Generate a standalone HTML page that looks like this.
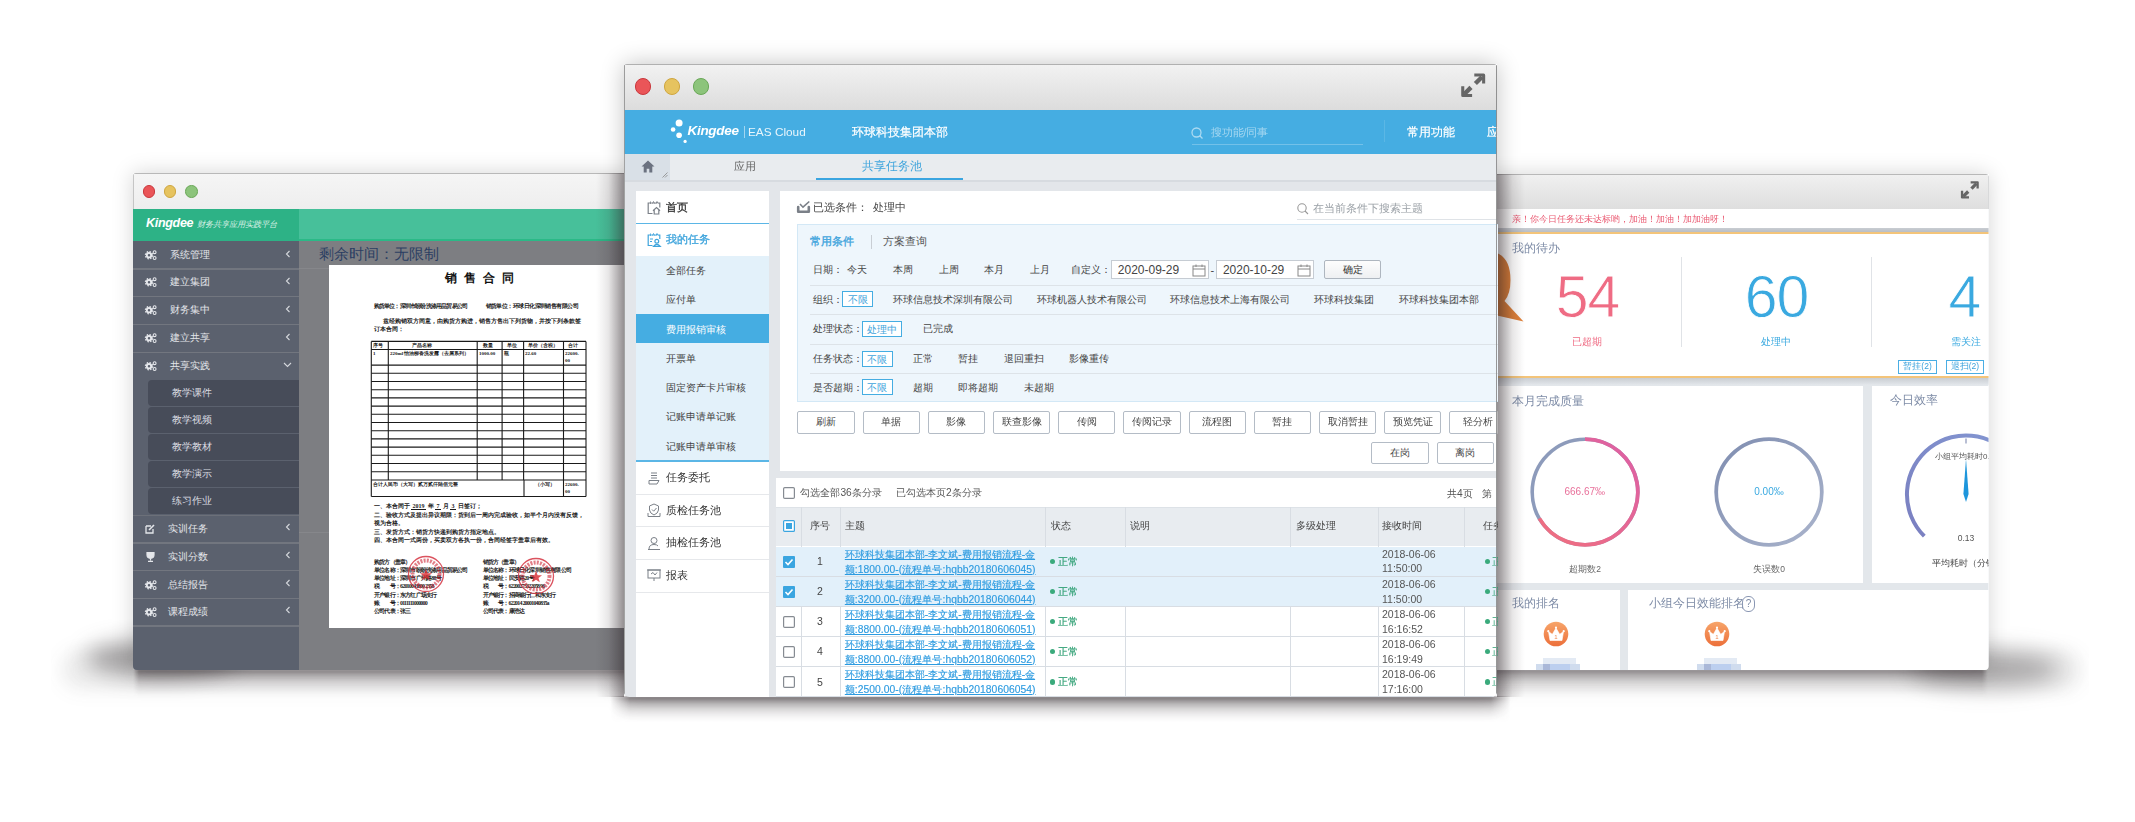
<!DOCTYPE html><html><head><meta charset="utf-8"><style>
*{box-sizing:border-box;margin:0;padding:0}
html,body{width:2135px;height:822px;overflow:hidden;background:#fff;font-family:"Liberation Sans",sans-serif;position:relative}
.a{position:absolute}
.t{position:absolute;white-space:nowrap}
.L{position:absolute;left:0;top:0;width:2135px;height:822px}
svg{position:absolute;left:0;top:0;overflow:visible}
</style></head><body><div id="root" style="position:absolute;left:0;top:0;width:2135px;height:822px;filter:blur(0.35px)">
<div class="a" style="left:51px;top:590px;width:2038px;height:150px;overflow:hidden"><div class="a" style="left:10px;top:60px;width:2020px;height:40px;border-radius:20px;background:rgba(60,55,58,0.09);filter:blur(9px)"></div><div class="a" style="left:35px;top:50px;width:150px;height:36px;border-radius:50%;background:rgba(60,55,58,0.45);filter:blur(11px)"></div><div class="a" style="left:1860px;top:62px;width:150px;height:34px;border-radius:50%;background:rgba(60,55,58,0.40);filter:blur(12px)"></div></div>
<div class="a" style="left:133px;top:669px;width:507px;height:28px;filter:blur(1.5px);background:linear-gradient(rgba(55,45,50,0.56) 0%,rgba(55,45,50,0.31) 22%,rgba(55,45,50,0.12) 50%,rgba(55,45,50,0.04) 80%,rgba(55,45,50,0) 100%);-webkit-mask-image:linear-gradient(90deg,transparent,#000 6px,#000 calc(100% - 6px),transparent)"></div>
<div class="a" style="left:1480px;top:669px;width:508px;height:28px;filter:blur(1.5px);background:linear-gradient(rgba(55,45,50,0.52) 0%,rgba(55,45,50,0.29) 22%,rgba(55,45,50,0.11) 50%,rgba(55,45,50,0.04) 80%,rgba(55,45,50,0) 100%);-webkit-mask-image:linear-gradient(90deg,transparent,#000 6px,#000 calc(100% - 6px),transparent)"></div>
<div class="a" style="left:609.5px;top:696px;width:901.5px;height:26px;filter:blur(1.5px);background:linear-gradient(rgba(55,45,50,0.66) 0%,rgba(55,45,50,0.36) 22%,rgba(55,45,50,0.15) 50%,rgba(55,45,50,0.04) 80%,rgba(55,45,50,0) 100%);-webkit-mask-image:linear-gradient(90deg,transparent,#000 20px,#000 calc(100% - 20px),transparent)"></div>
<div class="a" style="left:133px;top:173px;width:507px;height:497px;box-shadow:0 0 20px rgba(0,0,0,0.17)"></div>
<div class="L" style="clip-path:inset(173px 1495px 152px 133px round 3px 3px 4px 4px)">
<div class="a" style="left:133px;top:173px;width:507px;height:497px;background:#7d7e82"></div>
<div class="a" style="left:133px;top:173px;width:507px;height:36px;background:linear-gradient(#f5f5f5,#eeeeee);border-top:1px solid #b8b8b8;border-left:1px solid #c5c5c5"></div>
<div class="a" style="left:142.5px;top:185.2px;width:12.6px;height:12.6px;border-radius:50%;background:#ea5558;border:1px solid #c9383d"></div>
<div class="a" style="left:163.8px;top:185.2px;width:12.6px;height:12.6px;border-radius:50%;background:#e6c35f;border:1px solid #cfa640"></div>
<div class="a" style="left:185.1px;top:185.2px;width:12.6px;height:12.6px;border-radius:50%;background:#8cc47b;border:1px solid #6aa858"></div>
<div class="a" style="left:133px;top:209px;width:166px;height:32px;background:#2db286"></div>
<div class="a" style="left:299px;top:209px;width:341px;height:32px;background:#47c09a"></div>
<div class="a" style="left:299px;top:239px;width:341px;height:2px;background:#2bb987"></div>
<div class="t" style="left:146px;top:214.8px;font-size:12.5px;line-height:17.5px;color:#fff;font-weight:bold;font-style:italic;letter-spacing:-0.3px">Kingdee</div>
<div class="t" style="left:197px;top:219.2px;font-size:8.2px;line-height:11.5px;color:rgba(255,255,255,0.8);font-weight:normal;font-style:italic">财务共享应用实践平台</div>
<div class="a" style="left:133px;top:241px;width:166px;height:429px;background:#5b616e"></div>
<svg style="left:145px;top:249.5px" width="12" height="10" viewBox="0 0 12 10"><g fill="none" stroke="#e6e8ec"><circle cx="4" cy="5.2" r="2.2" stroke-width="1.9"/><circle cx="4" cy="5.2" r="3.6" stroke-width="1.3" stroke-dasharray="1.5 1.33"/><circle cx="9.6" cy="2.2" r="1.45" stroke-width="1.1"/><circle cx="9.6" cy="8" r="1.45" stroke-width="1.1"/></g></svg>
<div class="t" style="left:170px;top:247.5px;font-size:10px;line-height:14.0px;color:#e4e6ea;font-weight:normal;">系统管理</div>
<svg style="left:285px;top:249.5px" width="6" height="8"><path d="M4.5 1 L1.5 4 L4.5 7" fill="none" stroke="#d5d8dd" stroke-width="1.1"/></svg>
<div class="a" style="left:133px;top:268.0px;width:166px;height:1.6px;background:#72767f"></div>
<svg style="left:145px;top:277.4px" width="12" height="10" viewBox="0 0 12 10"><g fill="none" stroke="#e6e8ec"><circle cx="4" cy="5.2" r="2.2" stroke-width="1.9"/><circle cx="4" cy="5.2" r="3.6" stroke-width="1.3" stroke-dasharray="1.5 1.33"/><circle cx="9.6" cy="2.2" r="1.45" stroke-width="1.1"/><circle cx="9.6" cy="8" r="1.45" stroke-width="1.1"/></g></svg>
<div class="t" style="left:170px;top:275.4px;font-size:10px;line-height:14.0px;color:#e4e6ea;font-weight:normal;">建立集团</div>
<svg style="left:285px;top:277.4px" width="6" height="8"><path d="M4.5 1 L1.5 4 L4.5 7" fill="none" stroke="#d5d8dd" stroke-width="1.1"/></svg>
<div class="a" style="left:133px;top:295.9px;width:166px;height:1.6px;background:#72767f"></div>
<svg style="left:145px;top:305.29999999999995px" width="12" height="10" viewBox="0 0 12 10"><g fill="none" stroke="#e6e8ec"><circle cx="4" cy="5.2" r="2.2" stroke-width="1.9"/><circle cx="4" cy="5.2" r="3.6" stroke-width="1.3" stroke-dasharray="1.5 1.33"/><circle cx="9.6" cy="2.2" r="1.45" stroke-width="1.1"/><circle cx="9.6" cy="8" r="1.45" stroke-width="1.1"/></g></svg>
<div class="t" style="left:170px;top:303.3px;font-size:10px;line-height:14.0px;color:#e4e6ea;font-weight:normal;">财务集中</div>
<svg style="left:285px;top:305.29999999999995px" width="6" height="8"><path d="M4.5 1 L1.5 4 L4.5 7" fill="none" stroke="#d5d8dd" stroke-width="1.1"/></svg>
<div class="a" style="left:133px;top:323.79999999999995px;width:166px;height:1.6px;background:#72767f"></div>
<svg style="left:145px;top:333.19999999999993px" width="12" height="10" viewBox="0 0 12 10"><g fill="none" stroke="#e6e8ec"><circle cx="4" cy="5.2" r="2.2" stroke-width="1.9"/><circle cx="4" cy="5.2" r="3.6" stroke-width="1.3" stroke-dasharray="1.5 1.33"/><circle cx="9.6" cy="2.2" r="1.45" stroke-width="1.1"/><circle cx="9.6" cy="8" r="1.45" stroke-width="1.1"/></g></svg>
<div class="t" style="left:170px;top:331.2px;font-size:10px;line-height:14.0px;color:#e4e6ea;font-weight:normal;">建立共享</div>
<svg style="left:285px;top:333.19999999999993px" width="6" height="8"><path d="M4.5 1 L1.5 4 L4.5 7" fill="none" stroke="#d5d8dd" stroke-width="1.1"/></svg>
<div class="a" style="left:133px;top:351.69999999999993px;width:166px;height:1.6px;background:#72767f"></div>
<svg style="left:145px;top:361.0999999999999px" width="12" height="10" viewBox="0 0 12 10"><g fill="none" stroke="#e6e8ec"><circle cx="4" cy="5.2" r="2.2" stroke-width="1.9"/><circle cx="4" cy="5.2" r="3.6" stroke-width="1.3" stroke-dasharray="1.5 1.33"/><circle cx="9.6" cy="2.2" r="1.45" stroke-width="1.1"/><circle cx="9.6" cy="8" r="1.45" stroke-width="1.1"/></g></svg>
<div class="t" style="left:170px;top:359.1px;font-size:10px;line-height:14.0px;color:#e4e6ea;font-weight:normal;">共享实践</div>
<svg style="left:283px;top:362.0999999999999px" width="9" height="6"><path d="M1 1 L4.5 4.5 L8 1" fill="none" stroke="#d5d8dd" stroke-width="1.1"/></svg>
<div class="a" style="left:147.6px;top:380.0px;width:151.4px;height:26.0px;background:#474c59;border-radius:4px 0 0 4px"></div>
<div class="t" style="left:172px;top:386.0px;font-size:10px;line-height:14.0px;color:#d9dbe0;font-weight:normal;">教学课件</div>
<div class="a" style="left:147.6px;top:406.9px;width:151.4px;height:26.0px;background:#474c59;border-radius:4px 0 0 4px"></div>
<div class="t" style="left:172px;top:412.9px;font-size:10px;line-height:14.0px;color:#d9dbe0;font-weight:normal;">教学视频</div>
<div class="a" style="left:147.6px;top:433.8px;width:151.4px;height:26.0px;background:#474c59;border-radius:4px 0 0 4px"></div>
<div class="t" style="left:172px;top:439.8px;font-size:10px;line-height:14.0px;color:#d9dbe0;font-weight:normal;">教学教材</div>
<div class="a" style="left:147.6px;top:460.7px;width:151.4px;height:26.0px;background:#474c59;border-radius:4px 0 0 4px"></div>
<div class="t" style="left:172px;top:466.7px;font-size:10px;line-height:14.0px;color:#d9dbe0;font-weight:normal;">教学演示</div>
<div class="a" style="left:147.6px;top:487.6px;width:151.4px;height:26.0px;background:#474c59;border-radius:4px 0 0 4px"></div>
<div class="t" style="left:172px;top:493.6px;font-size:10px;line-height:14.0px;color:#d9dbe0;font-weight:normal;">练习作业</div>
<div class="a" style="left:133px;top:514.5px;width:166px;height:1.5px;background:#6c7079"></div>
<svg style="left:145px;top:524px" width="11" height="10"><path d="M1 2 H6 M1 2 V9 H8 V5" fill="none" stroke="#e4e6ea" stroke-width="1.3"/><path d="M4 6 L9 1" stroke="#e4e6ea" stroke-width="1.6"/></svg>
<div class="t" style="left:168px;top:522.0px;font-size:10px;line-height:14.0px;color:#e4e6ea;font-weight:normal;">实训任务</div>
<svg style="left:285px;top:523px" width="6" height="8"><path d="M4.5 1 L1.5 4 L4.5 7" fill="none" stroke="#d5d8dd" stroke-width="1.1"/></svg>
<div class="a" style="left:133px;top:542px;width:166px;height:1.6px;background:#72767f"></div>
<svg style="left:145px;top:551.8px" width="11" height="10"><path d="M2 0.5 H9 V3 Q9 6 5.5 6.5 Q2 6 2 3 Z M5.5 6.5 V8.5 M3 9.3 H8" fill="#e4e6ea" stroke="#e4e6ea" stroke-width="1.2"/></svg>
<div class="t" style="left:168px;top:549.8px;font-size:10px;line-height:14.0px;color:#e4e6ea;font-weight:normal;">实训分数</div>
<svg style="left:285px;top:550.8px" width="6" height="8"><path d="M4.5 1 L1.5 4 L4.5 7" fill="none" stroke="#d5d8dd" stroke-width="1.1"/></svg>
<div class="a" style="left:133px;top:569.8px;width:166px;height:1.6px;background:#72767f"></div>
<svg style="left:145px;top:579.5999999999999px" width="12" height="10" viewBox="0 0 12 10"><g fill="none" stroke="#e6e8ec"><circle cx="4" cy="5.2" r="2.2" stroke-width="1.9"/><circle cx="4" cy="5.2" r="3.6" stroke-width="1.3" stroke-dasharray="1.5 1.33"/><circle cx="9.6" cy="2.2" r="1.45" stroke-width="1.1"/><circle cx="9.6" cy="8" r="1.45" stroke-width="1.1"/></g></svg>
<div class="t" style="left:168px;top:577.6px;font-size:10px;line-height:14.0px;color:#e4e6ea;font-weight:normal;">总结报告</div>
<svg style="left:285px;top:578.5999999999999px" width="6" height="8"><path d="M4.5 1 L1.5 4 L4.5 7" fill="none" stroke="#d5d8dd" stroke-width="1.1"/></svg>
<div class="a" style="left:133px;top:597.5999999999999px;width:166px;height:1.6px;background:#72767f"></div>
<svg style="left:145px;top:607.3999999999999px" width="12" height="10" viewBox="0 0 12 10"><g fill="none" stroke="#e6e8ec"><circle cx="4" cy="5.2" r="2.2" stroke-width="1.9"/><circle cx="4" cy="5.2" r="3.6" stroke-width="1.3" stroke-dasharray="1.5 1.33"/><circle cx="9.6" cy="2.2" r="1.45" stroke-width="1.1"/><circle cx="9.6" cy="8" r="1.45" stroke-width="1.1"/></g></svg>
<div class="t" style="left:168px;top:605.4px;font-size:10px;line-height:14.0px;color:#e4e6ea;font-weight:normal;">课程成绩</div>
<svg style="left:285px;top:606.3999999999999px" width="6" height="8"><path d="M4.5 1 L1.5 4 L4.5 7" fill="none" stroke="#d5d8dd" stroke-width="1.1"/></svg>
<div class="a" style="left:133px;top:625.3999999999999px;width:166px;height:1.6px;background:#72767f"></div>
<div class="t" style="left:318.5px;top:243.3px;font-size:15.2px;line-height:21.3px;color:#2c3e62;font-weight:normal;">剩余时间：无限制</div>
<div class="a" style="left:299px;top:267.5px;width:341px;height:1.0px;background:#86878b"></div>
<div class="a" style="left:299px;top:532px;width:30px;height:1px;background:#86878b"></div>
<div class="a" style="left:328.5px;top:265px;width:311.5px;height:363px;background:#fff"></div>
<div class="t" style="left:444.5px;top:270.1px;font-size:12px;line-height:16.8px;color:#111;font-weight:bold;letter-spacing:7px">销售合同</div>
<div class="t" style="left:373.5px;top:301.5px;font-size:6px;line-height:8.4px;color:#1a1a1a;font-weight:bold;font-family:'Liberation Serif',serif;letter-spacing:-0.8px">购货单位：深圳市盼盼洗涤用品贸易公司</div>
<div class="t" style="left:485.5px;top:301.5px;font-size:6px;line-height:8.4px;color:#1a1a1a;font-weight:bold;font-family:'Liberation Serif',serif;letter-spacing:-0.55px">销货单位：环球日化深圳销售有限公司</div>
<div class="t" style="left:383px;top:317.1px;font-size:6px;line-height:8.4px;color:#1a1a1a;font-weight:bold;font-family:'Liberation Serif',serif">兹经购销双方同意，由购货方购进，销售方售出下列货物，并按下列条款签</div>
<div class="t" style="left:373.5px;top:325.3px;font-size:6px;line-height:8.4px;color:#1a1a1a;font-weight:bold;font-family:'Liberation Serif',serif">订本合同：</div>
<svg style="left:0;top:0" width="2135" height="822"><g stroke="#1a1a1a" stroke-width="1.1" fill="none"><line x1="371.3" y1="341.4" x2="586" y2="341.4"/><line x1="371.3" y1="349.5" x2="586" y2="349.5"/><line x1="371.3" y1="365.1" x2="586" y2="365.1"/><line x1="371.3" y1="373.3" x2="586" y2="373.3"/><line x1="371.3" y1="381.5" x2="586" y2="381.5"/><line x1="371.3" y1="389.7" x2="586" y2="389.7"/><line x1="371.3" y1="397.9" x2="586" y2="397.9"/><line x1="371.3" y1="406.09999999999997" x2="586" y2="406.09999999999997"/><line x1="371.3" y1="414.29999999999995" x2="586" y2="414.29999999999995"/><line x1="371.3" y1="422.49999999999994" x2="586" y2="422.49999999999994"/><line x1="371.3" y1="430.69999999999993" x2="586" y2="430.69999999999993"/><line x1="371.3" y1="438.8999999999999" x2="586" y2="438.8999999999999"/><line x1="371.3" y1="447.0999999999999" x2="586" y2="447.0999999999999"/><line x1="371.3" y1="455.2999999999999" x2="586" y2="455.2999999999999"/><line x1="371.3" y1="463.4999999999999" x2="586" y2="463.4999999999999"/><line x1="371.3" y1="471.6999999999999" x2="586" y2="471.6999999999999"/><line x1="371.3" y1="480" x2="586" y2="480"/><line x1="371.3" y1="496.5" x2="586" y2="496.5"/><line x1="371.3" y1="341.4" x2="371.3" y2="496.5"/><line x1="388.3" y1="341.4" x2="388.3" y2="480"/><line x1="477.2" y1="341.4" x2="477.2" y2="480"/><line x1="502.1" y1="341.4" x2="502.1" y2="480"/><line x1="523.6" y1="341.4" x2="523.6" y2="480"/><line x1="563.5" y1="341.4" x2="563.5" y2="480"/><line x1="586" y1="341.4" x2="586" y2="496.5"/><line x1="524" y1="480" x2="524" y2="496.5"/><line x1="563.5" y1="480" x2="563.5" y2="496.5"/></g></svg>
<div class="t" style="left:373px;top:342.0px;font-size:5px;line-height:7.0px;color:#1a1a1a;font-weight:bold;font-family:'Liberation Serif',serif">序号</div>
<div class="t" style="left:412px;top:342.0px;font-size:5px;line-height:7.0px;color:#1a1a1a;font-weight:bold;font-family:'Liberation Serif',serif">产品名称</div>
<div class="t" style="left:483px;top:342.0px;font-size:5px;line-height:7.0px;color:#1a1a1a;font-weight:bold;font-family:'Liberation Serif',serif">数量</div>
<div class="t" style="left:507px;top:342.0px;font-size:5px;line-height:7.0px;color:#1a1a1a;font-weight:bold;font-family:'Liberation Serif',serif">单位</div>
<div class="t" style="left:528px;top:342.0px;font-size:5px;line-height:7.0px;color:#1a1a1a;font-weight:bold;font-family:'Liberation Serif',serif">单价（含税）</div>
<div class="t" style="left:568px;top:342.0px;font-size:5px;line-height:7.0px;color:#1a1a1a;font-weight:bold;font-family:'Liberation Serif',serif">合计</div>
<div class="t" style="left:373px;top:350.0px;font-size:5px;line-height:7.0px;color:#1a1a1a;font-weight:bold;font-family:'Liberation Serif',serif">1</div>
<div class="t" style="left:390px;top:350.0px;font-size:5px;line-height:7.0px;color:#1a1a1a;font-weight:bold;font-family:'Liberation Serif',serif">220ml 怡油柳香洗发露（去屑系列）</div>
<div class="t" style="left:479px;top:350.0px;font-size:5px;line-height:7.0px;color:#1a1a1a;font-weight:bold;font-family:'Liberation Serif',serif">1000.00</div>
<div class="t" style="left:504px;top:350.0px;font-size:5px;line-height:7.0px;color:#1a1a1a;font-weight:bold;font-family:'Liberation Serif',serif">瓶</div>
<div class="t" style="left:525px;top:350.0px;font-size:5px;line-height:7.0px;color:#1a1a1a;font-weight:bold;font-family:'Liberation Serif',serif">22.60</div>
<div class="t" style="left:565px;top:350.0px;font-size:5px;line-height:7.0px;color:#1a1a1a;font-weight:bold;font-family:'Liberation Serif',serif">22600.</div>
<div class="t" style="left:565px;top:357.0px;font-size:5px;line-height:7.0px;color:#1a1a1a;font-weight:bold;font-family:'Liberation Serif',serif">00</div>
<div class="t" style="left:373px;top:481.0px;font-size:5px;line-height:7.0px;color:#1a1a1a;font-weight:bold;font-family:'Liberation Serif',serif">合计人民币（大写）贰万贰仟陆佰元整</div>
<div class="t" style="left:535px;top:481.0px;font-size:5px;line-height:7.0px;color:#1a1a1a;font-weight:bold;font-family:'Liberation Serif',serif">（小写）</div>
<div class="t" style="left:565px;top:481.0px;font-size:5px;line-height:7.0px;color:#1a1a1a;font-weight:bold;font-family:'Liberation Serif',serif">22600.</div>
<div class="t" style="left:565px;top:488.0px;font-size:5px;line-height:7.0px;color:#1a1a1a;font-weight:bold;font-family:'Liberation Serif',serif">00</div>
<div class="t" style="left:373.5px;top:502.3px;font-size:6px;line-height:8.4px;color:#1a1a1a;font-weight:bold;font-family:'Liberation Serif',serif">一、本合同于 <u>&nbsp;2019&nbsp;</u> 年 <u>&nbsp;7&nbsp;</u> 月 <u>&nbsp;3&nbsp;</u> 日签订；</div>
<div class="t" style="left:373.5px;top:510.7px;font-size:6px;line-height:8.4px;color:#1a1a1a;font-weight:bold;font-family:'Liberation Serif',serif">二、验收方式及提出异议期限：货到后一周内完成验收，如半个月内没有反馈，</div>
<div class="t" style="left:373.5px;top:519.1px;font-size:6px;line-height:8.4px;color:#1a1a1a;font-weight:bold;font-family:'Liberation Serif',serif">视为合格。</div>
<div class="t" style="left:373.5px;top:527.5px;font-size:6px;line-height:8.4px;color:#1a1a1a;font-weight:bold;font-family:'Liberation Serif',serif">三、发货方式：销货方快递到购货方指定地点。</div>
<div class="t" style="left:373.5px;top:535.9px;font-size:6px;line-height:8.4px;color:#1a1a1a;font-weight:bold;font-family:'Liberation Serif',serif">四、本合同一式两份，买卖双方各执一份，合同经签字盖章后有效。</div>
<div class="t" style="left:374px;top:557.8px;font-size:6px;line-height:8.4px;color:#1a1a1a;font-weight:bold;font-family:'Liberation Serif',serif;letter-spacing:-0.8px">购货方（盖章）</div>
<div class="t" style="left:482.5px;top:557.8px;font-size:6px;line-height:8.4px;color:#1a1a1a;font-weight:bold;font-family:'Liberation Serif',serif;letter-spacing:-0.8px">销货方（盖章）</div>
<div class="t" style="left:374px;top:566.0px;font-size:6px;line-height:8.4px;color:#1a1a1a;font-weight:bold;font-family:'Liberation Serif',serif;letter-spacing:-0.8px">单位名称：深圳市盼盼洗涤用品贸易公司</div>
<div class="t" style="left:482.5px;top:566.0px;font-size:6px;line-height:8.4px;color:#1a1a1a;font-weight:bold;font-family:'Liberation Serif',serif;letter-spacing:-0.8px">单位名称：环球日化深圳销售有限公司</div>
<div class="t" style="left:374px;top:574.2px;font-size:6px;line-height:8.4px;color:#1a1a1a;font-weight:bold;font-family:'Liberation Serif',serif;letter-spacing:-0.8px">单位地址：深圳市广州路88号</div>
<div class="t" style="left:482.5px;top:574.2px;font-size:6px;line-height:8.4px;color:#1a1a1a;font-weight:bold;font-family:'Liberation Serif',serif;letter-spacing:-0.8px">单位地址：民安路20号</div>
<div class="t" style="left:374px;top:582.4px;font-size:6px;line-height:8.4px;color:#1a1a1a;font-weight:bold;font-family:'Liberation Serif',serif;letter-spacing:-0.8px">税　　号：62010043800 2358</div>
<div class="t" style="left:482.5px;top:582.4px;font-size:6px;line-height:8.4px;color:#1a1a1a;font-weight:bold;font-family:'Liberation Serif',serif;letter-spacing:-0.8px">税　　号：62200273322058 96</div>
<div class="t" style="left:374px;top:590.6px;font-size:6px;line-height:8.4px;color:#1a1a1a;font-weight:bold;font-family:'Liberation Serif',serif;letter-spacing:-0.8px">开户银行：东方红广场支行</div>
<div class="t" style="left:482.5px;top:590.6px;font-size:6px;line-height:8.4px;color:#1a1a1a;font-weight:bold;font-family:'Liberation Serif',serif;letter-spacing:-0.8px">开户银行：招商银行仁和东支行</div>
<div class="t" style="left:374px;top:598.8px;font-size:6px;line-height:8.4px;color:#1a1a1a;font-weight:bold;font-family:'Liberation Serif',serif;letter-spacing:-0.8px">账　　号：0111111000000</div>
<div class="t" style="left:482.5px;top:598.8px;font-size:6px;line-height:8.4px;color:#1a1a1a;font-weight:bold;font-family:'Liberation Serif',serif;letter-spacing:-0.8px">账　　号：622014 20001040835a</div>
<div class="t" style="left:374px;top:607.0px;font-size:6px;line-height:8.4px;color:#1a1a1a;font-weight:bold;font-family:'Liberation Serif',serif;letter-spacing:-0.8px">公司代表：张三</div>
<div class="t" style="left:482.5px;top:607.0px;font-size:6px;line-height:8.4px;color:#1a1a1a;font-weight:bold;font-family:'Liberation Serif',serif;letter-spacing:-0.8px">公司代表：康浩达</div>
<svg style="left:406.5px;top:554.6px" width="38" height="38"><circle cx="19" cy="19" r="17.5" fill="none" stroke="rgba(210,40,55,0.8)" stroke-width="1.3"/><circle cx="19" cy="19" r="13.5" fill="none" stroke="rgba(205,40,55,0.6)" stroke-width="4" stroke-dasharray="2 1.2"/><path d="M19 14 L20.6 18.3 L25 18.3 L21.5 21 L22.8 25.3 L19 22.7 L15.2 25.3 L16.5 21 L13 18.3 L17.4 18.3 Z" fill="rgba(215,40,45,0.8)"/></svg>
<svg style="left:516.6px;top:557.2px" width="38" height="38"><circle cx="19" cy="19" r="17.5" fill="none" stroke="rgba(210,40,55,0.8)" stroke-width="1.3"/><circle cx="19" cy="19" r="13.5" fill="none" stroke="rgba(205,40,55,0.6)" stroke-width="4" stroke-dasharray="2 1.2"/><path d="M19 14 L20.6 18.3 L25 18.3 L21.5 21 L22.8 25.3 L19 22.7 L15.2 25.3 L16.5 21 L13 18.3 L17.4 18.3 Z" fill="rgba(215,40,45,0.8)"/></svg>
</div>
<div class="a" style="left:1480px;top:174px;width:508.5px;height:496px;box-shadow:0 0 20px rgba(0,0,0,0.17)"></div>
<div class="L" style="clip-path:inset(174px 146.5px 152px 1480px round 3px 3px 4px 4px)">
<div class="a" style="left:1480px;top:174px;width:508.5px;height:496px;background:#e3e7eb"></div>
<div class="a" style="left:1480px;top:174px;width:508.5px;height:34.5px;background:linear-gradient(#f0f0f0,#dedede);border-top:1px solid #b8b8b8;border-right:1px solid #c0c0c0"></div>
<svg style="left:1960.16px;top:180.16px" width="19.68" height="19.68" viewBox="0 0 24 24"><g fill="none" stroke="#666" stroke-linejoin="round"><path d="M13 2.8 H21.5 V10.5" stroke-width="2.8"/><path d="M20 4.5 L14 10.5" stroke-width="4"/><path d="M2.5 13 V21.3 H11" stroke-width="2.8"/><path d="M4 20 L10 14" stroke-width="4"/></g></svg>
<div class="a" style="left:1480px;top:208.5px;width:508.5px;height:19.5px;background:#fff"></div>
<div class="t" style="left:1512px;top:213.2px;font-size:8.9px;line-height:12.5px;color:#ea5a72;font-weight:normal;">亲！你今日任务还未达标哟，加油！加油！加加油呀！</div>
<div class="a" style="left:1480px;top:228px;width:508.5px;height:4px;background:linear-gradient(#c9cdd2,#b9bec5)"></div>
<div class="a" style="left:1480px;top:232px;width:508.5px;height:2px;background:#f3c47a"></div>
<div class="a" style="left:1480px;top:234px;width:508.5px;height:142px;background:#fff"></div>
<div class="a" style="left:1480px;top:376px;width:508.5px;height:2px;background:#f3c47a"></div>
<div class="a" style="left:1480px;top:378px;width:508.5px;height:7px;background:linear-gradient(#c9cdd2,#e3e7eb)"></div>
<div class="t" style="left:1512px;top:240.2px;font-size:11.8px;line-height:16.5px;color:#7d8ba6;font-weight:normal;">我的待办</div>
<div class="t" style="left:1387.5px;width:400px;text-align:center;top:255.7px;font-size:59px;line-height:82.6px;color:#ef6c84;font-weight:normal;letter-spacing:-1px;-webkit-text-stroke:0.8px #fff">54</div>
<div class="t" style="left:1387px;width:400px;text-align:center;top:334.5px;font-size:10px;line-height:14.0px;color:#ef6c84;font-weight:normal;">已超期</div>
<div class="a" style="left:1681px;top:257px;width:1px;height:90px;background:#e0e3e7"></div>
<div class="t" style="left:1576.5px;width:400px;text-align:center;top:255.7px;font-size:59px;line-height:82.6px;color:#3aa9e0;font-weight:normal;letter-spacing:-1px;-webkit-text-stroke:0.8px #fff">60</div>
<div class="t" style="left:1576px;width:400px;text-align:center;top:334.5px;font-size:10px;line-height:14.0px;color:#3aa9e0;font-weight:normal;">处理中</div>
<div class="a" style="left:1870.5px;top:257px;width:1.0px;height:90px;background:#e0e3e7"></div>
<div class="t" style="left:1765px;width:400px;text-align:center;top:255.7px;font-size:59px;line-height:82.6px;color:#3aa9e0;font-weight:normal;-webkit-text-stroke:0.8px #fff">4</div>
<div class="t" style="left:1766px;width:400px;text-align:center;top:334.5px;font-size:10px;line-height:14.0px;color:#3aa9e0;font-weight:normal;">需关注</div>
<div class="t" style="left:1898.3px;top:360px;width:38.5px;height:13.5px;border:1px solid #4aaee4;color:#3aa2dc;font-size:8.5px;line-height:11.5px;text-align:center">暂挂(2)</div>
<div class="t" style="left:1945.7px;top:360px;width:38.5px;height:13.5px;border:1px solid #4aaee4;color:#3aa2dc;font-size:8.5px;line-height:11.5px;text-align:center">退扫(2)</div>
<svg style="left:0;top:0" width="2135" height="822"><defs><linearGradient id="qg" x1="0" y1="0" x2="1" y2="0"><stop offset="0" stop-color="#c8702e"/><stop offset="1" stop-color="#e4843c"/></linearGradient></defs><path d="M1490 251 Q1510.5 254 1510.5 280 Q1510.5 294 1504.5 301 L1523.5 321.5 L1497 315.5 L1490 315 Z" fill="url(#qg)"/></svg>
<div class="a" style="left:1497px;top:385.5px;width:365.5px;height:197.5px;background:#fff"></div>
<div class="a" style="left:1872px;top:385.5px;width:116.5px;height:197.5px;background:#fff"></div>
<div class="t" style="left:1512px;top:392.8px;font-size:11.8px;line-height:16.5px;color:#7d8ba6;font-weight:normal;">本月完成质量</div>
<div class="t" style="left:1890px;top:391.8px;font-size:11.8px;line-height:16.5px;color:#7d8ba6;font-weight:normal;">今日效率</div>
<svg style="left:1525px;top:432px" width="120" height="120" viewBox="0 0 120 120">
<defs><linearGradient id="pg" x1="1" y1="0" x2="0" y2="1"><stop offset="0" stop-color="#dc5fa6"/><stop offset="1" stop-color="#f0707e"/></linearGradient>
<linearGradient id="gg" x1="0" y1="0" x2="1" y2="1"><stop offset="0" stop-color="#7f8db0"/><stop offset="1" stop-color="#aab4cc"/></linearGradient></defs>
<circle cx="60" cy="60" r="52.8" fill="none" stroke="#8d9bbb" stroke-width="3.6"/>
<path d="M60 7.2 A52.8 52.8 0 1 1 14.3 86.4" fill="none" stroke="url(#pg)" stroke-width="3.8"/>
</svg>
<div class="t" style="left:1384.8px;width:400px;text-align:center;top:485.0px;font-size:10px;line-height:14.0px;color:#e8709a;font-weight:normal;">666.67‰</div>
<div class="t" style="left:1385px;width:400px;text-align:center;top:563.5px;font-size:8.5px;line-height:11.9px;color:#666;font-weight:normal;">超期数2</div>
<svg style="left:1709px;top:432px" width="120" height="120" viewBox="0 0 120 120">
<circle cx="60" cy="60" r="52.8" fill="none" stroke="url(#gg)" stroke-width="3.8"/></svg>
<div class="t" style="left:1569px;width:400px;text-align:center;top:485.0px;font-size:10px;line-height:14.0px;color:#3aa9e0;font-weight:normal;">0.00‰</div>
<div class="t" style="left:1569px;width:400px;text-align:center;top:563.5px;font-size:8.5px;line-height:11.9px;color:#666;font-weight:normal;">失误数0</div>
<svg style="left:0;top:0" width="2135" height="822">
<defs><linearGradient id="vg" x1="0" y1="1" x2="1" y2="0"><stop offset="0" stop-color="#7a7fc0"/><stop offset="1" stop-color="#8397d2"/></linearGradient></defs>
<path d="M1924.3 536.2 A59 59 0 1 1 2017.1 465" fill="none" stroke="url(#vg)" stroke-width="4"/>
<line x1="1966" y1="438.5" x2="1966" y2="443.5" stroke="#8a94b8" stroke-width="1.2"/>
<path d="M1966 459 L1968.6 494 L1966 502 L1963.4 494 Z" fill="#1e96dc"/>
</svg>
<div class="t" style="left:1935px;top:451.4px;font-size:8px;line-height:11.2px;color:#555;font-weight:normal;">小组平均耗时0.13</div>
<div class="t" style="left:1766px;width:400px;text-align:center;top:533.0px;font-size:8.5px;line-height:11.9px;color:#555;font-weight:normal;">0.13</div>
<div class="t" style="left:1932px;top:556.7px;font-size:9px;line-height:12.6px;color:#444;font-weight:normal;">平均耗时（分钟）</div>
<div class="a" style="left:1497px;top:590px;width:123px;height:80px;background:#fff"></div>
<div class="a" style="left:1628px;top:590px;width:360.5px;height:80px;background:#fff"></div>
<div class="t" style="left:1512px;top:595.2px;font-size:11.8px;line-height:16.5px;color:#7d8ba6;font-weight:normal;">我的排名</div>
<div class="t" style="left:1648.5px;top:595.2px;font-size:11.8px;line-height:16.5px;color:#7d8ba6;font-weight:normal;">小组今日效能排名</div>
<div class="a" style="left:1742px;top:595.5px;width:13px;height:16px;border:1.2px solid #8a97b3;border-radius:6px;color:#7d8ba6;font-size:10px;line-height:13px;text-align:center">?</div>
<svg style="left:1543px;top:621px" width="26" height="26" viewBox="0 0 26 26">
<defs><linearGradient id="cr1556" x1="0" y1="0" x2="0" y2="1"><stop offset="0" stop-color="#f7a56a"/><stop offset="1" stop-color="#ec6f3a"/></linearGradient></defs>
<circle cx="13" cy="13" r="12.3" fill="url(#cr1556)"/>
<path d="M5.5 10.5 L9.3 13.3 L13 7 L16.7 13.3 L20.5 10.5 L19 19.5 H7 Z" fill="#fff" stroke="#fff" stroke-width="0.6" stroke-linejoin="round"/>
<circle cx="5.3" cy="10.2" r="1.1" fill="#fff"/><circle cx="20.7" cy="10.2" r="1.1" fill="#fff"/><circle cx="13" cy="6.6" r="1.1" fill="#fff"/>
<text x="13" y="17.6" font-size="6" text-anchor="middle" fill="#f08a55" font-family="Liberation Sans">1</text></svg>
<svg style="left:1704px;top:621px" width="26" height="26" viewBox="0 0 26 26">
<defs><linearGradient id="cr1717" x1="0" y1="0" x2="0" y2="1"><stop offset="0" stop-color="#f7a56a"/><stop offset="1" stop-color="#ec6f3a"/></linearGradient></defs>
<circle cx="13" cy="13" r="12.3" fill="url(#cr1717)"/>
<path d="M5.5 10.5 L9.3 13.3 L13 7 L16.7 13.3 L20.5 10.5 L19 19.5 H7 Z" fill="#fff" stroke="#fff" stroke-width="0.6" stroke-linejoin="round"/>
<circle cx="5.3" cy="10.2" r="1.1" fill="#fff"/><circle cx="20.7" cy="10.2" r="1.1" fill="#fff"/><circle cx="13" cy="6.6" r="1.1" fill="#fff"/>
<text x="13" y="17.6" font-size="6" text-anchor="middle" fill="#f08a55" font-family="Liberation Sans">1</text></svg>
<div class="a" style="left:1543px;top:658px;width:33px;height:6px;background:rgba(215,225,240,0.7);filter:blur(0.6px)"></div>
<div class="a" style="left:1536px;top:664px;width:44px;height:6px;background:rgba(200,214,235,0.85);filter:blur(0.6px)"></div>
<div class="a" style="left:1543px;top:664px;width:7px;height:6px;background:rgba(160,175,210,0.8);filter:blur(0.6px)"></div>
<div class="a" style="left:1550px;top:664px;width:20px;height:6px;background:rgba(185,205,238,0.9);filter:blur(0.6px)"></div>
<div class="a" style="left:1704px;top:658px;width:33px;height:6px;background:rgba(215,225,240,0.7);filter:blur(0.6px)"></div>
<div class="a" style="left:1697px;top:664px;width:44px;height:6px;background:rgba(200,214,235,0.85);filter:blur(0.6px)"></div>
<div class="a" style="left:1704px;top:664px;width:7px;height:6px;background:rgba(160,175,210,0.8);filter:blur(0.6px)"></div>
<div class="a" style="left:1711px;top:664px;width:20px;height:6px;background:rgba(185,205,238,0.9);filter:blur(0.6px)"></div>
</div>
<div class="a" style="left:623.5px;top:64px;width:873.8px;height:633px;box-shadow:0 0 22px rgba(0,0,0,0.24)"></div>
<div class="a" style="left:595.5px;top:173px;width:28px;height:524px;background:linear-gradient(90deg,rgba(55,45,50,0),rgba(55,45,50,0.10) 45%,rgba(55,45,50,0.45))"></div>
<div class="a" style="left:1497.3px;top:174px;width:28px;height:523px;background:linear-gradient(270deg,rgba(55,45,50,0),rgba(55,45,50,0.10) 45%,rgba(55,45,50,0.45))"></div>
<div class="L" style="clip-path:inset(64px 637.7px 125px 623.5px round 4px 4px 6px 6px)">
<div class="a" style="left:623.5px;top:64px;width:873.8px;height:633px;background:#e3e6ea"></div>
<div class="a" style="left:623.5px;top:64px;width:873.8px;height:45.5px;background:linear-gradient(#f2f2f2,#dcdcdc);border-top:1.5px solid #b0b0b0;border-left:1px solid #bcbcbc;border-right:1px solid #bcbcbc"></div>
<div class="a" style="left:634.5px;top:78.2px;width:16.6px;height:16.6px;border-radius:50%;background:#ea5558;border:1px solid #c9383d"></div>
<div class="a" style="left:663.5px;top:78.2px;width:16.6px;height:16.6px;border-radius:50%;background:#e6c35f;border:1px solid #cfa640"></div>
<div class="a" style="left:692.5px;top:78.2px;width:16.6px;height:16.6px;border-radius:50%;background:#8cc47b;border:1px solid #6aa858"></div>
<svg style="left:1459.8px;top:71.8px" width="26.400000000000002" height="26.400000000000002" viewBox="0 0 24 24"><g fill="none" stroke="#666" stroke-linejoin="round"><path d="M13 2.8 H21.5 V10.5" stroke-width="2.8"/><path d="M20 4.5 L14 10.5" stroke-width="4"/><path d="M2.5 13 V21.3 H11" stroke-width="2.8"/><path d="M4 20 L10 14" stroke-width="4"/></g></svg>
<div class="a" style="left:623.5px;top:109.5px;width:873.8px;height:44.0px;background:#45ade2"></div>
<svg style="left:0;top:0" width="2135" height="822"><circle cx="679.1" cy="123.1" r="3.5" fill="#fff"/><circle cx="673.1" cy="129.5" r="2.3" fill="#fff"/><circle cx="679.1" cy="135.2" r="2.8" fill="#fff"/><circle cx="685.1" cy="141.4" r="1.6" fill="#fff"/></svg>
<div class="t" style="left:687.5px;top:122.0px;font-size:13.5px;line-height:18.9px;color:#fff;font-weight:bold;font-style:italic;letter-spacing:-0.3px">Kingdee</div>
<div class="a" style="left:743.5px;top:126px;width:1.0px;height:12px;background:rgba(255,255,255,0.5)"></div>
<div class="t" style="left:748px;top:123.8px;font-size:11.8px;line-height:16.5px;color:rgba(255,255,255,0.88);font-weight:normal;">EAS Cloud</div>
<div class="t" style="left:851.5px;top:123.5px;font-size:11.5px;line-height:16.1px;color:#fff;font-weight:normal;-webkit-text-stroke:0.2px #fff">环球科技集团本部</div>
<svg style="left:1191px;top:126.5px" width="13" height="13"><circle cx="5.5" cy="5.5" r="4.5" fill="none" stroke="rgba(255,255,255,0.55)" stroke-width="1.3"/><path d="M8.8 8.8 L11.5 11.5" stroke="rgba(255,255,255,0.55)" stroke-width="1.3"/></svg>
<div class="t" style="left:1210.5px;top:125.2px;font-size:10.5px;line-height:14.7px;color:rgba(255,255,255,0.5);font-weight:normal;">搜功能/同事</div>
<div class="a" style="left:1191.5px;top:144px;width:171.5px;height:1px;background:rgba(255,255,255,0.25)"></div>
<div class="a" style="left:1384px;top:120px;width:1px;height:22px;background:rgba(255,255,255,0.12)"></div>
<div class="t" style="left:1407px;top:123.5px;font-size:11.5px;line-height:16.1px;color:#fff;font-weight:normal;-webkit-text-stroke:0.2px #fff">常用功能</div>
<div class="t" style="left:1486.5px;top:123.5px;font-size:11.5px;line-height:16.1px;color:#fff;font-weight:normal;-webkit-text-stroke:0.2px #fff">应用</div>
<div class="a" style="left:623.5px;top:153.5px;width:873.8px;height:26.5px;background:#e9ecef"></div>
<div class="a" style="left:623.5px;top:153.5px;width:46.0px;height:26.5px;background:#d9e0e7"></div>
<svg style="left:641px;top:160px" width="14" height="13"><path d="M7 0.5 L13.5 6.5 H11.3 V12.5 H8.3 V8.8 H5.7 V12.5 H2.7 V6.5 H0.5 Z" fill="#6b7280"/></svg>
<svg style="left:662px;top:172px" width="6" height="6"><path d="M0.5 5.5 L5.5 0.5 M3 5.5 L5.5 3" stroke="#888" stroke-width="0.8"/></svg>
<div class="t" style="left:734px;top:158.7px;font-size:11.2px;line-height:15.7px;color:#666;font-weight:normal;">应用</div>
<div class="t" style="left:862px;top:158.4px;font-size:11.6px;line-height:16.2px;color:#3ea4dc;font-weight:normal;">共享任务池</div>
<div class="a" style="left:815.7px;top:177.5px;width:147.3px;height:2.5px;background:#3aa5e0"></div>
<div class="a" style="left:623.5px;top:180px;width:873.8px;height:2px;background:#d7dbe0"></div>
<div class="a" style="left:636.4px;top:191.4px;width:133.0px;height:505.6px;background:#fff"></div>
<svg style="left:646.5px;top:199.5px" width="14" height="15"><path d="M5.5 13.5 H1.2 V3 H3 M11 3 H12.8 V7.5" fill="none" stroke="#7b8088" stroke-width="1.2"/><path d="M3.5 4 V1.5 M5.5 3.5 L6.5 1.5 L7.5 3.5 M9 3.5 L10 1.5 L11 3.5 M4 3 H10" fill="none" stroke="#7b8088" stroke-width="0.9"/><path d="M6 10.8 L9.5 7.5 L13 10.8 M7.2 10 V14 H11.8 V10" fill="none" stroke="#7b8088" stroke-width="1.2"/></svg>
<div class="t" style="left:665.8px;top:199.7px;font-size:11.2px;line-height:15.7px;color:#333;font-weight:normal;-webkit-text-stroke:0.32px #333">首页</div>
<div class="a" style="left:636.4px;top:222.6px;width:133.0px;height:1.6px;background:#5bb6e6"></div>
<svg style="left:646.5px;top:231.5px" width="14" height="15"><path d="M5.5 13.5 H1.2 V3 H3 M11 3 H12.8 V7" fill="none" stroke="#3ea4dc" stroke-width="1.2"/><path d="M3.5 4 V1.5 M5.5 3.5 L6.5 1.5 L7.5 3.5 M9 3.5 L10 1.5 L11 3.5 M4 3 H10" fill="none" stroke="#3ea4dc" stroke-width="0.9"/><path d="M3 7 H6 M3 9.5 H5" stroke="#3ea4dc" stroke-width="1"/><circle cx="9.8" cy="9.3" r="1.9" fill="none" stroke="#3ea4dc" stroke-width="1.2"/><path d="M6.5 14.3 Q9.8 10.5 13.3 14.3 Z" fill="none" stroke="#3ea4dc" stroke-width="1.2"/></svg>
<div class="t" style="left:665.8px;top:232.2px;font-size:11.2px;line-height:15.7px;color:#3ea4dc;font-weight:normal;-webkit-text-stroke:0.32px #3ea4dc">我的任务</div>
<div class="a" style="left:636.4px;top:255.5px;width:133.0px;height:205.5px;background:#e3f1fa"></div>
<div class="t" style="left:665.8px;top:263.9px;font-size:10.2px;line-height:14.3px;color:#444;font-weight:normal;">全部任务</div>
<div class="t" style="left:665.8px;top:293.2px;font-size:10.2px;line-height:14.3px;color:#444;font-weight:normal;">应付单</div>
<div class="a" style="left:636.4px;top:314px;width:133.0px;height:29px;background:#45ade2"></div>
<div class="t" style="left:665.8px;top:322.5px;font-size:10.2px;line-height:14.3px;color:#fff;font-weight:normal;">费用报销审核</div>
<div class="t" style="left:665.8px;top:351.8px;font-size:10.2px;line-height:14.3px;color:#444;font-weight:normal;">开票单</div>
<div class="t" style="left:665.8px;top:381.1px;font-size:10.2px;line-height:14.3px;color:#444;font-weight:normal;">固定资产卡片审核</div>
<div class="t" style="left:665.8px;top:410.4px;font-size:10.2px;line-height:14.3px;color:#444;font-weight:normal;">记账申请单记账</div>
<div class="t" style="left:665.8px;top:439.7px;font-size:10.2px;line-height:14.3px;color:#444;font-weight:normal;">记账申请单审核</div>
<div class="a" style="left:636.4px;top:460px;width:133.0px;height:2px;background:#5bb6e6"></div>
<svg style="left:646.5px;top:470.5px" width="14" height="15"><path d="M4 2 H10 M4 4.5 H10 M4 7 H10 M2 9.5 H12 L10 13 H2 Z" fill="none" stroke="#7b8088" stroke-width="1"/></svg>
<div class="t" style="left:665.8px;top:470.1px;font-size:11.2px;line-height:15.7px;color:#333;font-weight:normal;">任务委托</div>
<div class="a" style="left:636.4px;top:493.7px;width:133.0px;height:1.0px;background:#e6e8eb"></div>
<svg style="left:646.5px;top:503.1px" width="14" height="15"><path d="M7 1 L11.5 3 V7 Q11 10.5 7 12 Q3 10.5 2.5 7 V3 Z" fill="none" stroke="#7b8088" stroke-width="1"/><path d="M5 6.5 L6.7 8.2 L9.5 5" fill="none" stroke="#7b8088" stroke-width="1"/><path d="M1 10 V13.5 H13 V10" fill="none" stroke="#7b8088" stroke-width="1"/></svg>
<div class="t" style="left:665.8px;top:502.8px;font-size:11.2px;line-height:15.7px;color:#333;font-weight:normal;">质检任务池</div>
<div class="a" style="left:636.4px;top:526.3000000000001px;width:133.0px;height:1.0px;background:#e6e8eb"></div>
<svg style="left:646.5px;top:535.7px" width="14" height="15"><circle cx="7" cy="4.5" r="3" fill="none" stroke="#7b8088" stroke-width="1"/><path d="M2 13 Q2 8.5 7 8.5 Q10 8.5 11 10" fill="none" stroke="#7b8088" stroke-width="1"/><path d="M1 13.5 H13" stroke="#7b8088" stroke-width="1"/></svg>
<div class="t" style="left:665.8px;top:535.4px;font-size:11.2px;line-height:15.7px;color:#333;font-weight:normal;">抽检任务池</div>
<div class="a" style="left:636.4px;top:558.9000000000001px;width:133.0px;height:1.0px;background:#e6e8eb"></div>
<svg style="left:646.5px;top:568.3px" width="14" height="15"><rect x="1" y="2" width="12" height="8" fill="none" stroke="#7b8088" stroke-width="1"/><path d="M0 2 H14 M7 10 V13 M4 6 L6 4.5 L8 7 L10 4.5" fill="none" stroke="#7b8088" stroke-width="1"/></svg>
<div class="t" style="left:665.8px;top:567.9px;font-size:11.2px;line-height:15.7px;color:#333;font-weight:normal;">报表</div>
<div class="a" style="left:636.4px;top:591.5px;width:133.0px;height:1.0px;background:#e6e8eb"></div>
<div class="a" style="left:780.2px;top:191.2px;width:717.1px;height:279.8px;background:#fff"></div>
<svg style="left:796px;top:200px" width="15" height="14"><path d="M2.2 7 V11.8 H12.8 V7" fill="none" stroke="#7b8088" stroke-width="2.6" stroke-linejoin="round" stroke-linecap="round"/><path d="M4 4 L7 7.2 L13.3 1.5" fill="none" stroke="#7b8088" stroke-width="1.6"/></svg>
<div class="t" style="left:812.8px;top:200.4px;font-size:10.8px;line-height:15.1px;color:#444;font-weight:normal;">已选条件：</div>
<div class="t" style="left:872.7px;top:200.4px;font-size:10.8px;line-height:15.1px;color:#444;font-weight:normal;">处理中</div>
<svg style="left:1297px;top:203px" width="12" height="12"><circle cx="5" cy="5" r="4.2" fill="none" stroke="#999" stroke-width="1.1"/><path d="M8 8 L11 11" stroke="#999" stroke-width="1.1"/></svg>
<div class="t" style="left:1313px;top:201.0px;font-size:10.9px;line-height:15.3px;color:#9aa0a6;font-weight:normal;">在当前条件下搜索主题</div>
<div class="a" style="left:1297px;top:219px;width:200.3px;height:1px;background:#dfe3e7"></div>
<div class="a" style="left:797px;top:224px;width:713px;height:178.3px;background:#eef6fc;border:1px solid #d3e8f6"></div>
<div class="t" style="left:809.5px;top:233.8px;font-size:11.2px;line-height:15.7px;color:#3ea4dc;font-weight:normal;-webkit-text-stroke:0.35px #3ea4dc">常用条件</div>
<div class="a" style="left:871px;top:235px;width:1px;height:14px;background:#c9ced4"></div>
<div class="t" style="left:882.5px;top:233.8px;font-size:11.2px;line-height:15.7px;color:#555;font-weight:normal;">方案查询</div>
<div class="t" style="left:813px;top:263.2px;font-size:10.2px;line-height:14.3px;color:#444;font-weight:normal;">日期：</div>
<div class="t" style="left:847px;top:263.2px;font-size:10.2px;line-height:14.3px;color:#444;font-weight:normal;">今天</div>
<div class="t" style="left:893px;top:263.2px;font-size:10.2px;line-height:14.3px;color:#444;font-weight:normal;">本周</div>
<div class="t" style="left:939px;top:263.2px;font-size:10.2px;line-height:14.3px;color:#444;font-weight:normal;">上周</div>
<div class="t" style="left:984px;top:263.2px;font-size:10.2px;line-height:14.3px;color:#444;font-weight:normal;">本月</div>
<div class="t" style="left:1030px;top:263.2px;font-size:10.2px;line-height:14.3px;color:#444;font-weight:normal;">上月</div>
<div class="t" style="left:1070.6px;top:263.2px;font-size:10.2px;line-height:14.3px;color:#444;font-weight:normal;">自定义：</div>
<div class="a" style="left:1111.2px;top:260.3px;width:97.6px;height:19.0px;background:#fff;border:1px solid #c6ccd3"></div>
<div class="t" style="left:1117.8px;top:261.6px;font-size:12px;line-height:16.8px;color:#444;font-weight:normal;">2020-09-29</div>
<svg style="left:1191.8px;top:263.5px" width="14" height="13"><rect x="1" y="2" width="12" height="10" fill="none" stroke="#888" stroke-width="1"/><path d="M1 5 H13 M4 0.5 V3 M10 0.5 V3" stroke="#888" stroke-width="1"/></svg>
<div class="a" style="left:1216.3px;top:260.3px;width:97.7px;height:19.0px;background:#fff;border:1px solid #c6ccd3"></div>
<div class="t" style="left:1222.8999999999999px;top:261.6px;font-size:12px;line-height:16.8px;color:#444;font-weight:normal;">2020-10-29</div>
<svg style="left:1297px;top:263.5px" width="14" height="13"><rect x="1" y="2" width="12" height="10" fill="none" stroke="#888" stroke-width="1"/><path d="M1 5 H13 M4 0.5 V3 M10 0.5 V3" stroke="#888" stroke-width="1"/></svg>
<div class="t" style="left:1210.5px;top:262.8px;font-size:11px;line-height:15.4px;color:#444;font-weight:normal;">-</div>
<div class="a" style="left:1324px;top:260.3px;width:57px;height:19.0px;background:linear-gradient(#fdfdfd,#eef0f2);border:1px solid #aeb6bf;border-radius:2px"></div>
<div class="t" style="left:1152.5px;width:400px;text-align:center;top:263.3px;font-size:10px;line-height:14.0px;color:#333;font-weight:normal;">确定</div>
<div class="a" style="left:809.5px;top:284.8px;width:700.5px;height:1.0px;background:#dde3e8"></div>
<div class="a" style="left:809.5px;top:314.2px;width:700.5px;height:1.0px;background:#dde3e8"></div>
<div class="a" style="left:809.5px;top:343.8px;width:700.5px;height:1.0px;background:#dde3e8"></div>
<div class="a" style="left:809.5px;top:373px;width:700.5px;height:1px;background:#dde3e8"></div>
<div class="t" style="left:812.7px;top:292.5px;font-size:10.2px;line-height:14.3px;color:#444;font-weight:normal;">组织：</div>
<div class="t" style="left:842px;top:291.4px;width:31px;height:16px;border:1.2px solid #45ade2;background:#fff;color:#3ea4dc;font-size:10.2px;line-height:15px;text-align:center">不限</div>
<div class="t" style="left:893px;top:292.5px;font-size:10.2px;line-height:14.3px;color:#444;font-weight:normal;">环球信息技术深圳有限公司</div>
<div class="t" style="left:1037px;top:292.5px;font-size:10.2px;line-height:14.3px;color:#444;font-weight:normal;">环球机器人技术有限公司</div>
<div class="t" style="left:1170px;top:292.5px;font-size:10.2px;line-height:14.3px;color:#444;font-weight:normal;">环球信息技术上海有限公司</div>
<div class="t" style="left:1314px;top:292.5px;font-size:10.2px;line-height:14.3px;color:#444;font-weight:normal;">环球科技集团</div>
<div class="t" style="left:1398.7px;top:292.5px;font-size:10.2px;line-height:14.3px;color:#444;font-weight:normal;">环球科技集团本部</div>
<div class="t" style="left:812.7px;top:321.9px;font-size:10.2px;line-height:14.3px;color:#444;font-weight:normal;">处理状态：</div>
<div class="t" style="left:861.6px;top:321px;width:40.89999999999998px;height:16px;border:1.2px solid #45ade2;background:#fff;color:#3ea4dc;font-size:10.2px;line-height:15px;text-align:center">处理中</div>
<div class="t" style="left:923.3px;top:321.9px;font-size:10.2px;line-height:14.3px;color:#444;font-weight:normal;">已完成</div>
<div class="t" style="left:812.7px;top:351.6px;font-size:10.2px;line-height:14.3px;color:#444;font-weight:normal;">任务状态：</div>
<div class="t" style="left:861.6px;top:350.5px;width:31.100000000000023px;height:16px;border:1.2px solid #45ade2;background:#fff;color:#3ea4dc;font-size:10.2px;line-height:15px;text-align:center">不限</div>
<div class="t" style="left:913px;top:351.6px;font-size:10.2px;line-height:14.3px;color:#444;font-weight:normal;">正常</div>
<div class="t" style="left:958.4px;top:351.6px;font-size:10.2px;line-height:14.3px;color:#444;font-weight:normal;">暂挂</div>
<div class="t" style="left:1003.7px;top:351.6px;font-size:10.2px;line-height:14.3px;color:#444;font-weight:normal;">退回重扫</div>
<div class="t" style="left:1068.8px;top:351.6px;font-size:10.2px;line-height:14.3px;color:#444;font-weight:normal;">影像重传</div>
<div class="t" style="left:812.7px;top:380.5px;font-size:10.2px;line-height:14.3px;color:#444;font-weight:normal;">是否超期：</div>
<div class="t" style="left:861.6px;top:379.4px;width:31.100000000000023px;height:16px;border:1.2px solid #45ade2;background:#fff;color:#3ea4dc;font-size:10.2px;line-height:15px;text-align:center">不限</div>
<div class="t" style="left:913px;top:380.5px;font-size:10.2px;line-height:14.3px;color:#444;font-weight:normal;">超期</div>
<div class="t" style="left:958.4px;top:380.5px;font-size:10.2px;line-height:14.3px;color:#444;font-weight:normal;">即将超期</div>
<div class="t" style="left:1023.6px;top:380.5px;font-size:10.2px;line-height:14.3px;color:#444;font-weight:normal;">未超期</div>
<div class="t" style="left:797.4px;top:411.3px;width:57.3px;height:22.3px;border:1px solid #b4bcc6;border-radius:2px;background:#fff;color:#444;font-size:10.2px;line-height:20.3px;text-align:center">刷新</div>
<div class="t" style="left:862.6px;top:411.3px;width:57.3px;height:22.3px;border:1px solid #b4bcc6;border-radius:2px;background:#fff;color:#444;font-size:10.2px;line-height:20.3px;text-align:center">单据</div>
<div class="t" style="left:927.8px;top:411.3px;width:57.3px;height:22.3px;border:1px solid #b4bcc6;border-radius:2px;background:#fff;color:#444;font-size:10.2px;line-height:20.3px;text-align:center">影像</div>
<div class="t" style="left:993.0px;top:411.3px;width:57.3px;height:22.3px;border:1px solid #b4bcc6;border-radius:2px;background:#fff;color:#444;font-size:10.2px;line-height:20.3px;text-align:center">联查影像</div>
<div class="t" style="left:1058.2px;top:411.3px;width:57.3px;height:22.3px;border:1px solid #b4bcc6;border-radius:2px;background:#fff;color:#444;font-size:10.2px;line-height:20.3px;text-align:center">传阅</div>
<div class="t" style="left:1123.4px;top:411.3px;width:57.3px;height:22.3px;border:1px solid #b4bcc6;border-radius:2px;background:#fff;color:#444;font-size:10.2px;line-height:20.3px;text-align:center">传阅记录</div>
<div class="t" style="left:1188.6px;top:411.3px;width:57.3px;height:22.3px;border:1px solid #b4bcc6;border-radius:2px;background:#fff;color:#444;font-size:10.2px;line-height:20.3px;text-align:center">流程图</div>
<div class="t" style="left:1253.8px;top:411.3px;width:57.3px;height:22.3px;border:1px solid #b4bcc6;border-radius:2px;background:#fff;color:#444;font-size:10.2px;line-height:20.3px;text-align:center">暂挂</div>
<div class="t" style="left:1319.0px;top:411.3px;width:57.3px;height:22.3px;border:1px solid #b4bcc6;border-radius:2px;background:#fff;color:#444;font-size:10.2px;line-height:20.3px;text-align:center">取消暂挂</div>
<div class="t" style="left:1384.2px;top:411.3px;width:57.3px;height:22.3px;border:1px solid #b4bcc6;border-radius:2px;background:#fff;color:#444;font-size:10.2px;line-height:20.3px;text-align:center">预览凭证</div>
<div class="t" style="left:1449.4px;top:411.3px;width:57.3px;height:22.3px;border:1px solid #b4bcc6;border-radius:2px;background:#fff;color:#444;font-size:10.2px;line-height:20.3px;text-align:center">轻分析</div>
<div class="t" style="left:1371.4px;top:442.4px;width:57.2px;height:22px;border:1px solid #b4bcc6;border-radius:2px;background:#fff;color:#444;font-size:10.2px;line-height:20px;text-align:center">在岗</div>
<div class="t" style="left:1436.7px;top:442.4px;width:57.2px;height:22px;border:1px solid #b4bcc6;border-radius:2px;background:#fff;color:#444;font-size:10.2px;line-height:20px;text-align:center">离岗</div>
<div class="a" style="left:776.4px;top:478.3px;width:720.9px;height:218.7px;background:#fff"></div>
<svg style="left:782.5px;top:486.8px" width="12" height="12"><rect x="0.6" y="0.6" width="10.8" height="10.8" rx="1.2" fill="#fff" stroke="#868b92" stroke-width="1.2"/></svg>
<div class="t" style="left:800.4px;top:485.9px;font-size:10.2px;line-height:14.3px;color:#555;font-weight:normal;">勾选全部36条分录</div>
<div class="t" style="left:896px;top:485.9px;font-size:10.2px;line-height:14.3px;color:#555;font-weight:normal;">已勾选本页2条分录</div>
<div class="t" style="left:1447px;top:486.9px;font-size:10.2px;line-height:14.3px;color:#555;font-weight:normal;">共4页</div>
<div class="t" style="left:1482.2px;top:486.9px;font-size:10.2px;line-height:14.3px;color:#555;font-weight:normal;">第</div>
<div class="a" style="left:776.4px;top:507.4px;width:720.9px;height:39.1px;background:#e8ecf0"></div>
<div class="a" style="left:776.4px;top:507.4px;width:720.9px;height:1.0px;background:#dde2e7"></div>
<div class="a" style="left:801px;top:507.4px;width:1px;height:189.6px;background:#d8dde3"></div>
<div class="a" style="left:839.6px;top:507.4px;width:1.0px;height:189.6px;background:#d8dde3"></div>
<div class="a" style="left:1045.4px;top:507.4px;width:1.0px;height:189.6px;background:#d8dde3"></div>
<div class="a" style="left:1124.6px;top:507.4px;width:1.0px;height:189.6px;background:#d8dde3"></div>
<div class="a" style="left:1290px;top:507.4px;width:1px;height:189.6px;background:#d8dde3"></div>
<div class="a" style="left:1377.7px;top:507.4px;width:1.0px;height:189.6px;background:#d8dde3"></div>
<div class="a" style="left:1463.8px;top:507.4px;width:1.0px;height:189.6px;background:#d8dde3"></div>
<svg style="left:782.5px;top:520.3px" width="12" height="12"><rect x="0.6" y="0.6" width="10.8" height="10.8" rx="1" fill="#fff" stroke="#3aa5e0" stroke-width="1.2"/><rect x="3" y="3" width="6" height="6" fill="#3aa5e0"/></svg>
<div class="t" style="left:809.5px;top:519.4px;font-size:10.2px;line-height:14.3px;color:#444;font-weight:normal;">序号</div>
<div class="t" style="left:844.8px;top:519.4px;font-size:10.2px;line-height:14.3px;color:#444;font-weight:normal;">主题</div>
<div class="t" style="left:1051px;top:519.4px;font-size:10.2px;line-height:14.3px;color:#444;font-weight:normal;">状态</div>
<div class="t" style="left:1130px;top:519.4px;font-size:10.2px;line-height:14.3px;color:#444;font-weight:normal;">说明</div>
<div class="t" style="left:1295.7px;top:519.4px;font-size:10.2px;line-height:14.3px;color:#444;font-weight:normal;">多级处理</div>
<div class="t" style="left:1382px;top:519.4px;font-size:10.2px;line-height:14.3px;color:#444;font-weight:normal;">接收时间</div>
<div class="t" style="left:1482.8px;top:519.4px;font-size:10.2px;line-height:14.3px;color:#444;font-weight:normal;">任务</div>
<div class="a" style="left:776.4px;top:546.5px;width:720.9px;height:30.1px;background:#e2f0fa"></div>
<div class="a" style="left:776.4px;top:575.6px;width:720.9px;height:1.0px;background:#d8dde3"></div>
<svg style="left:782.5px;top:555.5px" width="12" height="12"><rect x="0" y="0" width="12" height="12" rx="1" fill="#3aa5e0"/><path d="M2.5 6 L5 8.5 L9.5 3.5" fill="none" stroke="#fff" stroke-width="1.6"/></svg>
<div class="t" style="left:620px;width:400px;text-align:center;top:554.1px;font-size:10.5px;line-height:14.7px;color:#444;font-weight:normal;">1</div>
<div class="t" style="left:844.8px;top:547.7px;font-size:10.3px;line-height:14.4px;color:#2d9be0;font-weight:normal;text-decoration:underline;-webkit-text-stroke:0.15px #2d9be0">环球科技集团本部-李文斌-费用报销流程-金</div>
<div class="t" style="left:844.8px;top:562.5px;font-size:10.3px;line-height:14.4px;color:#2d9be0;font-weight:normal;text-decoration:underline;letter-spacing:0.05px;-webkit-text-stroke:0.15px #2d9be0">额:1800.00-(流程单号:hqbb20180606045)</div>
<div class="a" style="left:1049.5px;top:558.8px;width:5.4px;height:5.4px;border-radius:50%;background:#3aaa7c"></div>
<div class="t" style="left:1058px;top:554.9px;font-size:10.2px;line-height:14.3px;color:#2e9f73;font-weight:normal;-webkit-text-stroke:0.2px #2e9f73">正常</div>
<div class="t" style="left:1382px;top:546.8px;font-size:10.5px;line-height:14.7px;color:#555;font-weight:normal;">2018-06-06</div>
<div class="t" style="left:1382px;top:561.4px;font-size:10.5px;line-height:14.7px;color:#555;font-weight:normal;">11:50:00</div>
<div class="a" style="left:1484.5px;top:558.8px;width:5.4px;height:5.4px;border-radius:50%;background:#3aaa7c"></div>
<div class="t" style="left:1492px;top:554.9px;font-size:10.2px;line-height:14.3px;color:#2e9f73;font-weight:normal;">正常</div>
<div class="a" style="left:776.4px;top:576.6px;width:720.9px;height:30.1px;background:#e2f0fa"></div>
<div class="a" style="left:776.4px;top:605.7px;width:720.9px;height:1.0px;background:#d8dde3"></div>
<svg style="left:782.5px;top:585.6px" width="12" height="12"><rect x="0" y="0" width="12" height="12" rx="1" fill="#3aa5e0"/><path d="M2.5 6 L5 8.5 L9.5 3.5" fill="none" stroke="#fff" stroke-width="1.6"/></svg>
<div class="t" style="left:620px;width:400px;text-align:center;top:584.2px;font-size:10.5px;line-height:14.7px;color:#444;font-weight:normal;">2</div>
<div class="t" style="left:844.8px;top:577.8px;font-size:10.3px;line-height:14.4px;color:#2d9be0;font-weight:normal;text-decoration:underline;-webkit-text-stroke:0.15px #2d9be0">环球科技集团本部-李文斌-费用报销流程-金</div>
<div class="t" style="left:844.8px;top:592.6px;font-size:10.3px;line-height:14.4px;color:#2d9be0;font-weight:normal;text-decoration:underline;letter-spacing:0.05px;-webkit-text-stroke:0.15px #2d9be0">额:3200.00-(流程单号:hqbb20180606044)</div>
<div class="a" style="left:1049.5px;top:588.9px;width:5.4px;height:5.4px;border-radius:50%;background:#3aaa7c"></div>
<div class="t" style="left:1058px;top:585.0px;font-size:10.2px;line-height:14.3px;color:#2e9f73;font-weight:normal;-webkit-text-stroke:0.2px #2e9f73">正常</div>
<div class="t" style="left:1382px;top:576.9px;font-size:10.5px;line-height:14.7px;color:#555;font-weight:normal;">2018-06-06</div>
<div class="t" style="left:1382px;top:591.5px;font-size:10.5px;line-height:14.7px;color:#555;font-weight:normal;">11:50:00</div>
<div class="a" style="left:1484.5px;top:588.9px;width:5.4px;height:5.4px;border-radius:50%;background:#3aaa7c"></div>
<div class="t" style="left:1492px;top:585.0px;font-size:10.2px;line-height:14.3px;color:#2e9f73;font-weight:normal;">正常</div>
<div class="a" style="left:776.4px;top:635.8000000000001px;width:720.9px;height:1.0px;background:#d8dde3"></div>
<svg style="left:782.5px;top:615.7px" width="12" height="12"><rect x="0.6" y="0.6" width="10.8" height="10.8" rx="1.2" fill="#fff" stroke="#868b92" stroke-width="1.2"/></svg>
<div class="t" style="left:620px;width:400px;text-align:center;top:614.4px;font-size:10.5px;line-height:14.7px;color:#444;font-weight:normal;">3</div>
<div class="t" style="left:844.8px;top:607.9px;font-size:10.3px;line-height:14.4px;color:#2d9be0;font-weight:normal;text-decoration:underline;-webkit-text-stroke:0.15px #2d9be0">环球科技集团本部-李文斌-费用报销流程-金</div>
<div class="t" style="left:844.8px;top:622.7px;font-size:10.3px;line-height:14.4px;color:#2d9be0;font-weight:normal;text-decoration:underline;letter-spacing:0.05px;-webkit-text-stroke:0.15px #2d9be0">额:8800.00-(流程单号:hqbb20180606051)</div>
<div class="a" style="left:1049.5px;top:619.0px;width:5.4px;height:5.4px;border-radius:50%;background:#3aaa7c"></div>
<div class="t" style="left:1058px;top:615.1px;font-size:10.2px;line-height:14.3px;color:#2e9f73;font-weight:normal;-webkit-text-stroke:0.2px #2e9f73">正常</div>
<div class="t" style="left:1382px;top:607.0px;font-size:10.5px;line-height:14.7px;color:#555;font-weight:normal;">2018-06-06</div>
<div class="t" style="left:1382px;top:621.6px;font-size:10.5px;line-height:14.7px;color:#555;font-weight:normal;">16:16:52</div>
<div class="a" style="left:1484.5px;top:619.0px;width:5.4px;height:5.4px;border-radius:50%;background:#3aaa7c"></div>
<div class="t" style="left:1492px;top:615.1px;font-size:10.2px;line-height:14.3px;color:#2e9f73;font-weight:normal;">正常</div>
<div class="a" style="left:776.4px;top:665.9px;width:720.9px;height:1.0px;background:#d8dde3"></div>
<svg style="left:782.5px;top:645.8px" width="12" height="12"><rect x="0.6" y="0.6" width="10.8" height="10.8" rx="1.2" fill="#fff" stroke="#868b92" stroke-width="1.2"/></svg>
<div class="t" style="left:620px;width:400px;text-align:center;top:644.4px;font-size:10.5px;line-height:14.7px;color:#444;font-weight:normal;">4</div>
<div class="t" style="left:844.8px;top:638.0px;font-size:10.3px;line-height:14.4px;color:#2d9be0;font-weight:normal;text-decoration:underline;-webkit-text-stroke:0.15px #2d9be0">环球科技集团本部-李文斌-费用报销流程-金</div>
<div class="t" style="left:844.8px;top:652.8px;font-size:10.3px;line-height:14.4px;color:#2d9be0;font-weight:normal;text-decoration:underline;letter-spacing:0.05px;-webkit-text-stroke:0.15px #2d9be0">额:8800.00-(流程单号:hqbb20180606052)</div>
<div class="a" style="left:1049.5px;top:649.0999999999999px;width:5.4px;height:5.4px;border-radius:50%;background:#3aaa7c"></div>
<div class="t" style="left:1058px;top:645.1px;font-size:10.2px;line-height:14.3px;color:#2e9f73;font-weight:normal;-webkit-text-stroke:0.2px #2e9f73">正常</div>
<div class="t" style="left:1382px;top:637.0px;font-size:10.5px;line-height:14.7px;color:#555;font-weight:normal;">2018-06-06</div>
<div class="t" style="left:1382px;top:651.6px;font-size:10.5px;line-height:14.7px;color:#555;font-weight:normal;">16:19:49</div>
<div class="a" style="left:1484.5px;top:649.0999999999999px;width:5.4px;height:5.4px;border-radius:50%;background:#3aaa7c"></div>
<div class="t" style="left:1492px;top:645.1px;font-size:10.2px;line-height:14.3px;color:#2e9f73;font-weight:normal;">正常</div>
<div class="a" style="left:776.4px;top:696.0px;width:720.9px;height:1.0px;background:#d8dde3"></div>
<svg style="left:782.5px;top:675.9px" width="12" height="12"><rect x="0.6" y="0.6" width="10.8" height="10.8" rx="1.2" fill="#fff" stroke="#868b92" stroke-width="1.2"/></svg>
<div class="t" style="left:620px;width:400px;text-align:center;top:674.5px;font-size:10.5px;line-height:14.7px;color:#444;font-weight:normal;">5</div>
<div class="t" style="left:844.8px;top:668.1px;font-size:10.3px;line-height:14.4px;color:#2d9be0;font-weight:normal;text-decoration:underline;-webkit-text-stroke:0.15px #2d9be0">环球科技集团本部-李文斌-费用报销流程-金</div>
<div class="t" style="left:844.8px;top:682.9px;font-size:10.3px;line-height:14.4px;color:#2d9be0;font-weight:normal;text-decoration:underline;letter-spacing:0.05px;-webkit-text-stroke:0.15px #2d9be0">额:2500.00-(流程单号:hqbb20180606054)</div>
<div class="a" style="left:1049.5px;top:679.1999999999999px;width:5.4px;height:5.4px;border-radius:50%;background:#3aaa7c"></div>
<div class="t" style="left:1058px;top:675.2px;font-size:10.2px;line-height:14.3px;color:#2e9f73;font-weight:normal;-webkit-text-stroke:0.2px #2e9f73">正常</div>
<div class="t" style="left:1382px;top:667.1px;font-size:10.5px;line-height:14.7px;color:#555;font-weight:normal;">2018-06-06</div>
<div class="t" style="left:1382px;top:681.8px;font-size:10.5px;line-height:14.7px;color:#555;font-weight:normal;">17:16:00</div>
<div class="a" style="left:1484.5px;top:679.1999999999999px;width:5.4px;height:5.4px;border-radius:50%;background:#3aaa7c"></div>
<div class="t" style="left:1492px;top:675.2px;font-size:10.2px;line-height:14.3px;color:#2e9f73;font-weight:normal;">正常</div>
<div class="a" style="left:623.5px;top:64px;width:1.3px;height:633px;background:rgba(150,150,150,0.85)"></div>
<div class="a" style="left:1495.8px;top:64px;width:1.5px;height:633px;background:rgba(140,140,140,0.9)"></div>
</div>
</div></body></html>
